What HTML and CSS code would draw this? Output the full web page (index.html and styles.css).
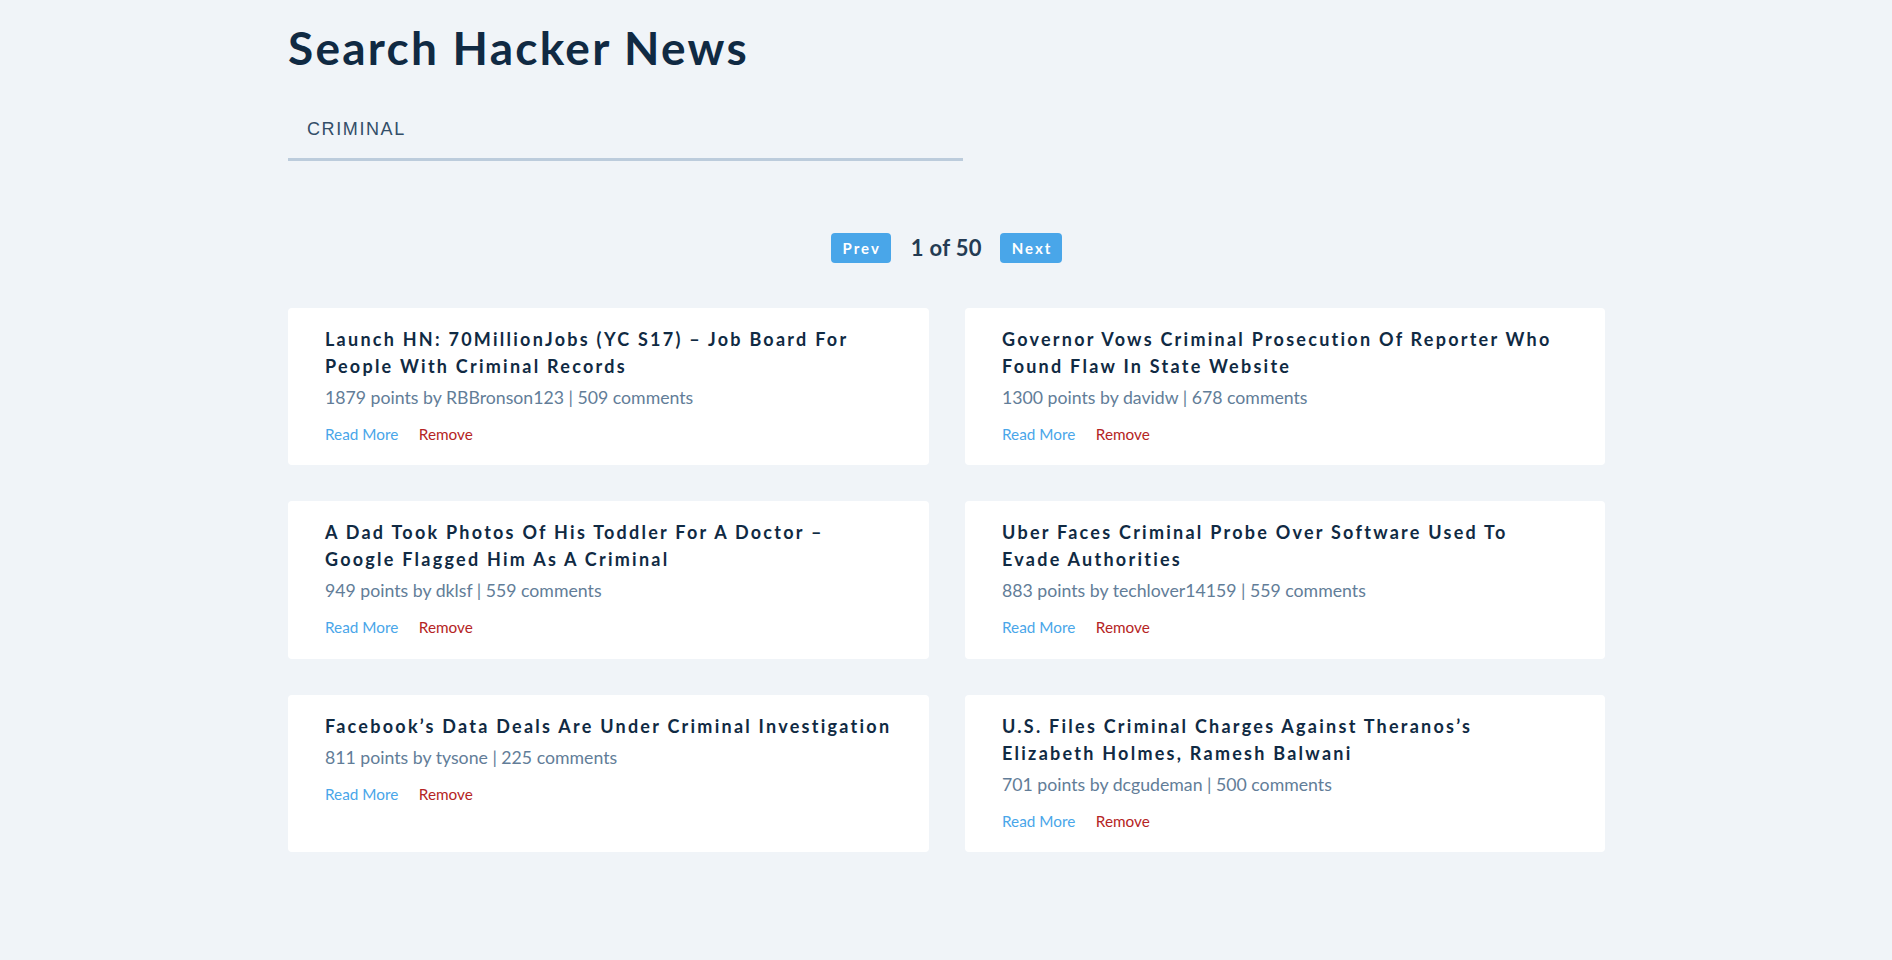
FILE: index.html
```html
<!DOCTYPE html>
<html lang="en">
<head>
<meta charset="utf-8">
<title>Search Hacker News</title>
<link rel="stylesheet" href="styles.css">
</head>
<body>
<main class="page">
  <form class="search-form">
    <h1 class="page-title">search hacker news</h1>
    <input class="form-input" type="text" value="criminal">
  </form>

  <div class="btn-container">
    <button class="page-btn" type="button">prev</button>
    <p class="page-count">1 of 50</p>
    <button class="page-btn" type="button">next</button>
  </div>

  <section class="stories">
    <article class="story">
      <h4 class="story-title">Launch HN: 70MillionJobs (YC S17) – Job Board for<br>People with Criminal Records</h4>
      <p class="story-info">1879 points by <span>RBBronson123 | </span>509 comments</p>
      <div class="story-actions">
        <a class="read-link" href="#">read more</a>
        <button class="remove-btn" type="button">remove</button>
      </div>
    </article>
    <article class="story">
      <h4 class="story-title">Governor vows criminal prosecution of reporter who<br>found flaw in state website</h4>
      <p class="story-info">1300 points by <span>davidw | </span>678 comments</p>
      <div class="story-actions">
        <a class="read-link" href="#">read more</a>
        <button class="remove-btn" type="button">remove</button>
      </div>
    </article>
    <article class="story">
      <h4 class="story-title">A dad took photos of his toddler for a doctor –<br>Google flagged him as a criminal</h4>
      <p class="story-info">949 points by <span>dklsf | </span>559 comments</p>
      <div class="story-actions">
        <a class="read-link" href="#">read more</a>
        <button class="remove-btn" type="button">remove</button>
      </div>
    </article>
    <article class="story">
      <h4 class="story-title">Uber faces criminal probe over software used to<br>evade authorities</h4>
      <p class="story-info">883 points by <span>techlover14159 | </span>559 comments</p>
      <div class="story-actions">
        <a class="read-link" href="#">read more</a>
        <button class="remove-btn" type="button">remove</button>
      </div>
    </article>
    <article class="story">
      <h4 class="story-title">Facebook’s data deals are under criminal investigation</h4>
      <p class="story-info">811 points by <span>tysone | </span>225 comments</p>
      <div class="story-actions">
        <a class="read-link" href="#">read more</a>
        <button class="remove-btn" type="button">remove</button>
      </div>
    </article>
    <article class="story">
      <h4 class="story-title">U.S. files criminal charges against Theranos’s<br>Elizabeth Holmes, Ramesh Balwani</h4>
      <p class="story-info">701 points by <span>dcgudeman | </span>500 comments</p>
      <div class="story-actions">
        <a class="read-link" href="#">read more</a>
        <button class="remove-btn" type="button">remove</button>
      </div>
    </article>
  </section>
</main>
</body>
</html>
```

FILE: styles.css
```css
* {
  box-sizing: border-box;
}

html, body {
  margin: 0;
  padding: 0;
}

body {
  background: #f0f4f8;
  color: #102a43;
  font-family: Lato, "Open Sans", sans-serif;
  font-size: 18px;
  line-height: 1.5;
}

.page {
  width: 1317px;
  margin-left: calc(50% - 658px);
}

.search-form {
  padding-top: 25px;
  margin: 0;
}

.page-title {
  margin: 0;
  font-size: 46px;
  line-height: 46px;
  font-weight: 700;
  letter-spacing: 2.25px;
  text-transform: capitalize;
  color: #102a43;
}

.form-input {
  display: block;
  width: 675px;
  margin-top: 30px;
  padding: 18px 18px 18px 19px;
  border: none;
  border-bottom: 3px solid #bcccdc;
  background: transparent;
  font-family: "Liberation Sans", Arial, sans-serif;
  font-size: 18px;
  line-height: 21px;
  height: 60px;
  color: #334e68;
  text-transform: uppercase;
  letter-spacing: 1.6px;
  outline: none;
}

.btn-container {
  display: flex;
  justify-content: center;
  align-items: center;
  margin-top: 72px;
  height: 30px;
}

.page-btn {
  height: 30px;
  padding: 0 10px 0 12px;
  border: none;
  border-radius: 4px;
  background: #49a6e9;
  color: #ffffff;
  font-family: Lato, "Open Sans", sans-serif;
  font-size: 15px;
  font-weight: 700;
  letter-spacing: 2px;
  text-transform: capitalize;
  line-height: 30px;
}

.page-count {
  margin: 0 18px 0 20px;
  font-size: 22px;
  font-weight: 700;
  line-height: 30px;
  letter-spacing: 0.3px;
  color: #243b53;
}

.stories {
  display: grid;
  grid-template-columns: 641px 640px;
  gap: 36px;
  margin-top: 45px;
  margin-bottom: 90px;
}

.story {
  background: #ffffff;
  border-radius: 4px;
  padding: 18px 30px 17.25px 37px;
}

.story-title {
  margin: 0 0 4px 0;
  font-size: 18px;
  line-height: 27px;
  font-weight: 700;
  letter-spacing: 2.25px;
  text-transform: capitalize;
  color: #102a43;
}

.story-info {
  margin: 0 0 9px 0;
  font-size: 17.7px;
  line-height: 27px;
  color: #627d98;
}

.story-actions {
  font-size: 18px;
  line-height: 27px;
}

.read-link {
  font-size: 15.3px;
  margin-right: 16px;
  color: #49a6e9;
  text-decoration: none;
  text-transform: capitalize;
}

.remove-btn {
  padding: 0;
  border: none;
  background: transparent;
  font-family: Lato, "Open Sans", sans-serif;
  font-size: 15.3px;
  color: #b52424;
  text-transform: capitalize;
  cursor: pointer;
}
```
